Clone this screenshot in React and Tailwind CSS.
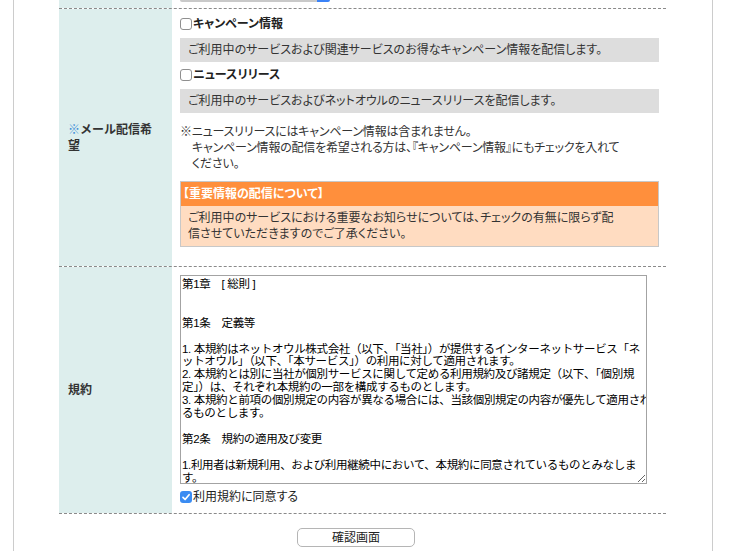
const agreement = `第1章　[ 総則 ]


第1条　定義等

1. 本規約はネットオウル株式会社（以下、「当社」）が提供するインターネットサービス「ネ
ットオウル」（以下、「本サービス」）の利用に対して適用されます。
2. 本規約とは別に当社が個別サービスに関して定める利用規約及び諸規定（以下、「個別規
定」）は、それぞれ本規約の一部を構成するものとします。
3. 本規約と前項の個別規定の内容が異なる場合には、当該個別規定の内容が優先して適用され
るものとします。

第2条　規約の適用及び変更

1.利用者は新規利用、および利用継続中において、本規約に同意されているものとみなしま
す。
2.当社は、利用者の承諾を得ることなく本規約を変更することがあります。`;

const Box = ({ checked }) =>
  checked ? (
    <span className="inline-flex h-[12px] w-[12px] shrink-0 items-center justify-center rounded-[3px] bg-[#3b8cf2]">
      <svg viewBox="0 0 12 12" className="h-[12px] w-[12px]">
        <path d="M3 6.4 5.1 8.5 9.1 3.7" fill="none" stroke="#fff" strokeWidth="1.7" strokeLinecap="round" strokeLinejoin="round" />
      </svg>
    </span>
  ) : (
    <span className="inline-block h-[12px] w-[12px] shrink-0 rounded-[3px] border border-[#8f8f8f] bg-white" />
  );

const Check = ({ checked, bold, children }) => (
  <label className={`flex h-[20px] items-center gap-[1px] text-[12px] text-[#222] ${bold ? 'font-bold' : ''}`}>
    <Box checked={checked} />
    <span>{children}</span>
  </label>
);

export default function App() {
  return (
    <div className="min-h-[551px] bg-white font-['Liberation_Sans','Noto_Sans_CJK_JP',sans-serif] text-[#333] [font-feature-settings:'palt']">
      <div className="ml-[13px] min-h-[551px] w-[700px] border-x border-[#cccccc]">
        <div className="ml-[45px] w-[607px]">
          {/* tail of the row above */}
          <div className="flex h-[8px]">
            <div className="w-[113px] bg-[#ddeeed]" />
            <div className="flex-1 pl-[8px]">
              <div className="flex h-[2px]">
                <div className="w-[137px] rounded-bl-[2px] bg-[#c9c9c9]" />
                <div className="w-[13px] rounded-br-[2px] bg-[#3a82f7]" />
              </div>
            </div>
          </div>

          {/* mail row */}
          <div className="flex border-y border-dashed border-[#8a8a8a]">
            <div className="flex w-[113px] items-center bg-[#ddeeed] pl-[9px] text-[12px] font-bold leading-[16px] text-[#333] [font-feature-settings:normal]">
              <div>
                <div className="flex">
                  <span className="text-[#3d8ed8]">※</span>
                  <span>メール配信希</span>
                </div>
                <div>望</div>
              </div>
            </div>
            <div className="flex-1 pb-[19px] pl-[8px] pr-[7px] pt-[5px]">
              <Check bold>キャンペーン情報</Check>
              <div className="mt-[4px] flex h-[24px] items-center bg-[#dddddd] pl-[8px] text-[12px]">
                ご利用中のサービスおよび関連サービスのお得なキャンペーン情報を配信します。
              </div>
              <div className="mt-[3px]">
                <Check bold>ニュースリリース</Check>
              </div>
              <div className="mt-[4px] flex h-[24px] items-center bg-[#dddddd] pl-[8px] text-[12px]">
                ご利用中のサービスおよびネットオウルのニュースリリースを配信します。
              </div>
              <p className="mt-[11px] whitespace-nowrap pl-[12px] -indent-[12px] text-[12px] leading-[16px] tracking-[-0.2px]">
                ※ニュースリリースにはキャンペーン情報は含まれません。
                <br />
                キャンペーン情報の配信を希望される方は、『キャンペーン情報』にもチェックを入れて
                <br />
                ください。
              </p>
              <div className="mt-[9px] border border-[#c8c8c8]">
                <div className="flex h-[24px] items-center bg-[#ff8f3c] pl-[2px] text-[12px] font-bold text-white">
                  【重要情報の配信について】
                </div>
                <p className="whitespace-nowrap bg-[#ffdcc1] py-[4px] pl-[7px] text-[12px] leading-[16px]">
                  ご利用中のサービスにおける重要なお知らせについては、チェックの有無に限らず配
                  <br />
                  信させていただきますのでご了承ください。
                </p>
              </div>
            </div>
          </div>

          {/* agreement row */}
          <div className="flex border-b border-dashed border-[#8a8a8a]">
            <div className="flex w-[113px] items-center bg-[#ddeeed] pl-[9px] text-[12px] font-bold text-[#333]">
              規約
            </div>
            <div className="flex-1 pb-[6px] pl-[8px] pt-[8px]">
              <textarea
                readOnly
                wrap="off"
                value={agreement}
                className="block h-[209px] w-[467px] resize overflow-hidden border border-[#a3a3a3] bg-white px-[1px] py-[2px] text-[11.5px] leading-[12.9px] tracking-[-0.34px] text-black outline-none [font-feature-settings:normal]"
              />
              <div className="mt-[3px]">
                <Check checked>利用規約に同意する</Check>
              </div>
            </div>
          </div>
        </div>

        <div className="mt-[14px] flex justify-center pr-[14px]">
          <button className="h-[19px] w-[118px] rounded-[5px] border border-[#b5b5b5] bg-white text-[12px] leading-none text-[#222]">
            確認画面
          </button>
        </div>
      </div>
    </div>
  );
}
